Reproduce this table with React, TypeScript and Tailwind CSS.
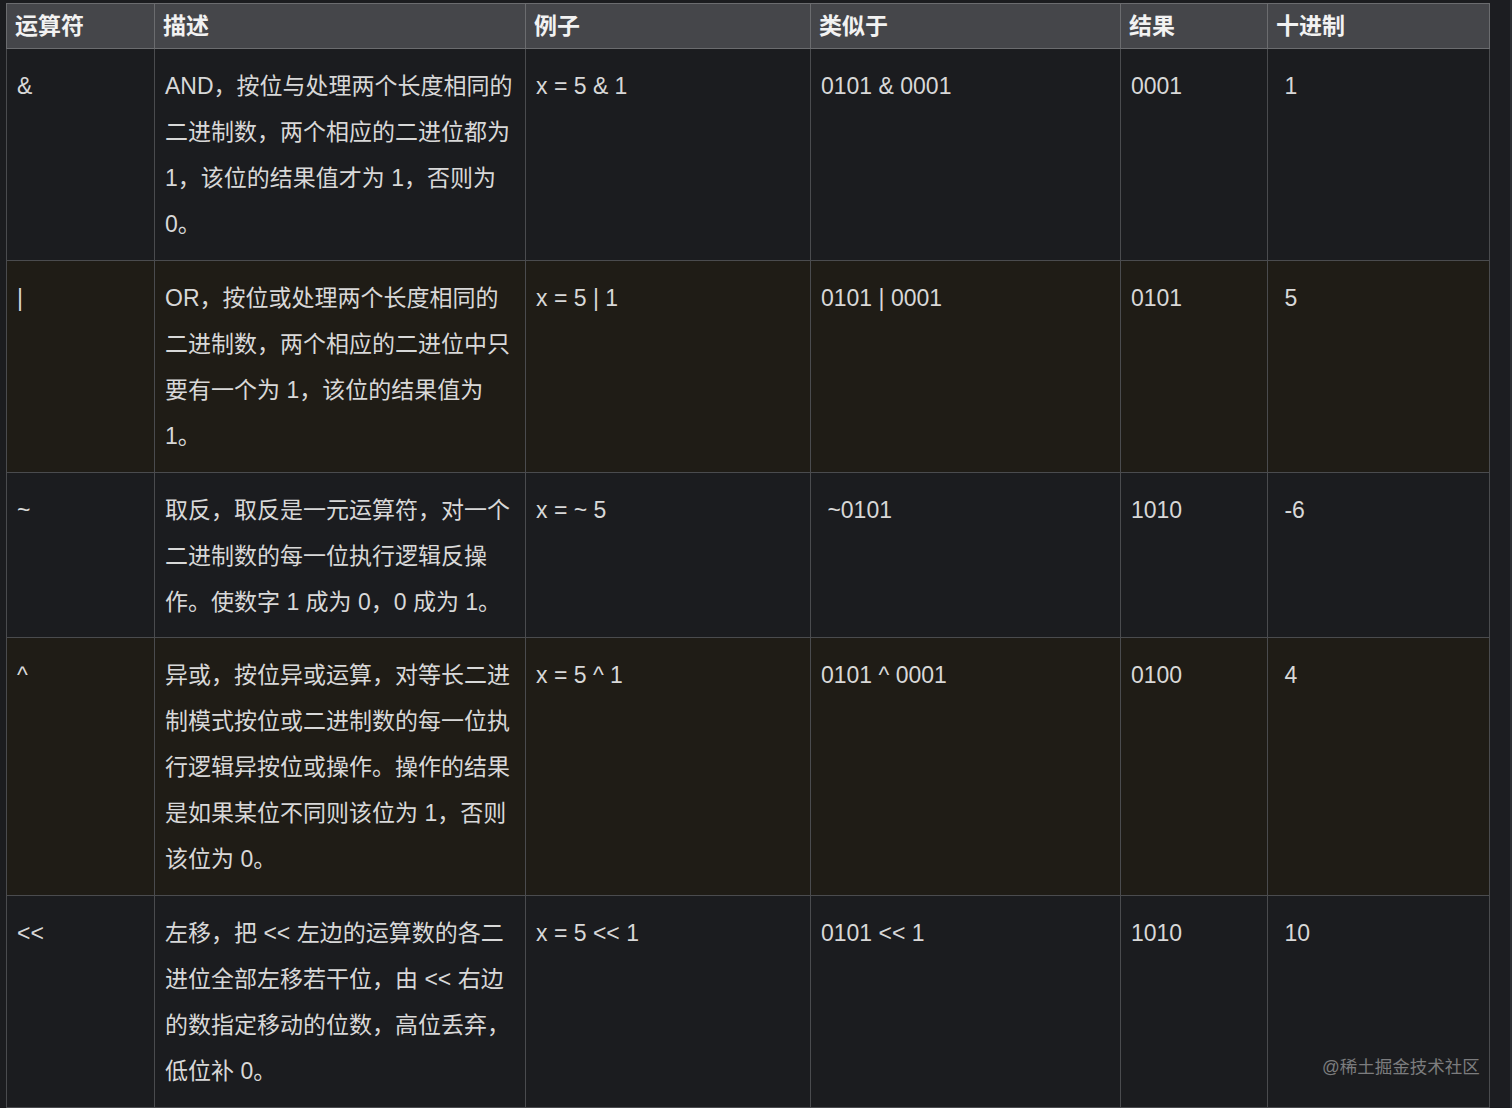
import React from "react";

const font = { fontFamily: '"Liberation Sans", "Noto Sans CJK SC", sans-serif' };

type Row = { op: string; desc: string[]; ex: string; like: string; res: string; dec: string; alt?: boolean; short?: boolean };

const rows: Row[] = [
  {
    op: "&",
    desc: ["AND，按位与处理两个长度相同的", "二进制数，两个相应的二进位都为", "1，该位的结果值才为 1，否则为", "0。"],
    ex: "x = 5 & 1",
    like: "0101 & 0001",
    res: "0001",
    dec: "1",
  },
  {
    op: "|",
    desc: ["OR，按位或处理两个长度相同的", "二进制数，两个相应的二进位中只", "要有一个为 1，该位的结果值为", "1。"],
    ex: "x = 5 | 1",
    like: "0101 | 0001",
    res: "0101",
    dec: "5",
    alt: true,
  },
  {
    op: "~",
    desc: ["取反，取反是一元运算符，对一个", "二进制数的每一位执行逻辑反操", "作。使数字 1 成为 0，0 成为 1。"],
    ex: "x = ~ 5",
    like: "\u00a0~0101",
    res: "1010",
    dec: "-6",
    short: true,
  },
  {
    op: "^",
    desc: ["异或，按位异或运算，对等长二进", "制模式按位或二进制数的每一位执", "行逻辑异按位或操作。操作的结果", "是如果某位不同则该位为 1，否则", "该位为 0。"],
    ex: "x = 5 ^ 1",
    like: "0101 ^ 0001",
    res: "0100",
    dec: "4",
    alt: true,
  },
  {
    op: "<<",
    desc: ["左移，把 << 左边的运算数的各二", "进位全部左移若干位，由 << 右边", "的数指定移动的位数，高位丢弃，", "低位补 0。"],
    ex: "x = 5 << 1",
    like: "0101 << 1",
    res: "1010",
    dec: "10",
  },
];

const headers = ["运算符", "描述", "例子", "类似于", "结果", "十进制"];
const widths = ["w-[148px]", "w-[371px]", "w-[285px]", "w-[310px]", "w-[147px]", "w-[222px]"];

export default function App() {
  return (
    <div className="relative w-[1512px] h-[1108px] overflow-hidden bg-[#1b1c1f] flex" style={font}>
      <div className="pt-[3px] pl-[6px] w-[1490px]">
        <table className="border-collapse table-fixed w-[1484px] text-[23px] leading-[46px] text-[#d8d8d8]">
          <colgroup>
            {widths.map((w, i) => (
              <col key={i} className={w} />
            ))}
          </colgroup>
          <thead>
            <tr className="bg-[#45464a]">
              {headers.map((h) => (
                <th
                  key={h}
                  className="border border-[#6b6c6f] text-left font-bold text-[#f2f2f2] px-[8px] h-[45px] leading-[30px] align-middle"
                >
                  {h}
                </th>
              ))}
            </tr>
          </thead>
          <tbody>
            {rows.map((r, i) => {
              const bg = r.alt ? "bg-[#1f1c16]" : "bg-[#1b1c1f]";
              const td =
                "border border-[#4a4b4e] align-top pl-[10px] pr-[4px] pt-[14px] whitespace-nowrap " +
                (r.short ? "pb-[12px]" : "pb-[13px]");
              return (
                <tr key={i} className={bg}>
                  <td className={td}>{r.op}</td>
                  <td className={td}>
                    {r.desc.map((l, j) => (
                      <div key={j}>{l}</div>
                    ))}
                  </td>
                  <td className={td}>{r.ex}</td>
                  <td className={td}>{r.like}</td>
                  <td className={td}>{r.res}</td>
                  <td className={td}>{"\u00a0" + r.dec}</td>
                </tr>
              );
            })}
          </tbody>
        </table>
      </div>
      <div className="flex-1 flex justify-end bg-[#1c1d21]">
        <div className="w-[2px] bg-[#2c2f34]" />
      </div>
      <div className="absolute left-[1322px] top-[1055px] text-[17.5px] leading-[24px] text-[#7c7c7e]">
        @稀土掘金技术社区
      </div>
    </div>
  );
}
